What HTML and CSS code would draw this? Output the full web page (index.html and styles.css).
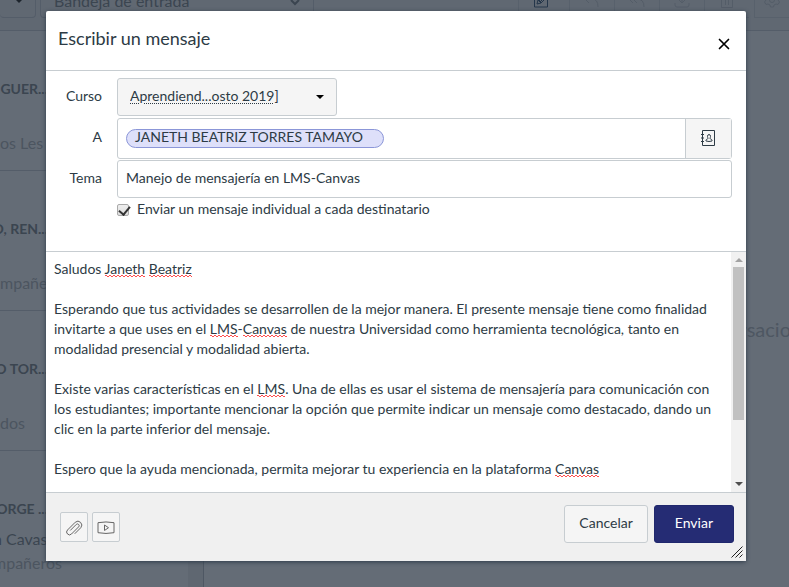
FILE: index.html
```html
<!DOCTYPE html>
<html lang="es">
<head>
<meta charset="utf-8">
<meta name="viewport" content="width=device-width, initial-scale=1">
<title>Escribir un mensaje</title>
<link rel="stylesheet" href="styles.css">
</head>
<body>
<div class="inbox" inert>
  <header class="toolbar">
    <div class="filter filter-course"><span class="caret-small"></span></div>
    <div class="filter filter-box">Bandeja de entrada
      <svg width="10" height="8" viewBox="0 0 10 8"><path d="M1 0l4 4 4-4" fill="none" stroke="currentColor" stroke-width="2"/></svg>
    </div>
    <div class="tools">
      <div class="tool tool-active"><svg width="16" height="16" viewBox="0 0 16 16" fill="none" stroke="currentColor"><path d="M6 2.500H1.500v12.500h13V7M4 12l1-4 7-7 3 3-7 7zM5 8l3 3M6 9l6-6M7 10l6-6"/></svg></div>
      <div class="tool tool-first"><svg width="16" height="16" viewBox="0 0 16 16" fill="none" stroke="currentColor"><path d="M5 3L1 7l4 4M1 7h7q6 0 6 8"/></svg></div>
      <div class="tool"><svg width="18" height="16" viewBox="0 0 18 16" fill="none" stroke="currentColor"><path d="M5 3L1 7l4 4M9 3L5 7l4 4M5 7h4q7 0 7 8"/></svg></div>
      <div class="tool"><svg width="16" height="16" viewBox="0 0 16 16" fill="none" stroke="currentColor"><path d="M8 0v11M4 7l4 4 4-4M1 11v2q0 2 2 2h10q2 0 2-2v-2"/></svg></div>
      <div class="tool"><svg width="16" height="16" viewBox="0 0 16 16" fill="none" stroke="currentColor"><path d="M2.500 2v13.500h11V2M6.500 4v9M9.500 4v9M1 2h14"/></svg></div>
      <div class="tool tool-gear"><svg width="16" height="16" viewBox="0 0 16 16" fill="none" stroke="currentColor"><circle cx="8" cy="8" r="2.500"/><path d="M6.500 1h3l.5 2 2 1 2-.5 1.500 2.500-1.500 2 1.500 2-1.500 2.500-2-.5-2 1-.5 2h-3L6 13l-2-1-2 .5L.5 10 2 8 .5 6 2 3.500l2 .5 2-1z"/></svg></div>
    </div>
  </header>
  <div class="panes">
    <ul class="threads">
      <li><b>GUER...</b><span class="subject"></span><span class="snippet">os Les</span></li>
      <li><b>O, REN...</b><span class="subject"></span><span class="snippet">mpañeros</span></li>
      <li><b>O TOR...</b><span class="subject"></span><span class="snippet">dos</span></li>
      <li class="compact"><b>ORGE ...</b><span class="subject">n Cavas</span><span class="snippet">mpañeros</span></li>
    </ul>
    <div class="track"></div>
    <div class="empty"><p>No hay conversaciones</p></div>
  </div>
</div>

<form class="dialog" role="dialog" aria-labelledby="dialog-title">
  <header class="dialog-head">
    <h1 id="dialog-title">Escribir un mensaje</h1>
    <button class="close" type="button" aria-label="Cerrar"><svg width="12" height="12" viewBox="0 0 12 12"><path d="M1.500 1.500l9 9m0-9l-9 9" stroke="#000" stroke-width="1.700" stroke-linecap="round"/></svg></button>
  </header>

  <div class="fields">
    <label for="course">Curso</label>
    <div class="course-wrap">
      <select id="course" class="course"><option>Aprendiend...osto 2019]</option></select>
      <span class="caret"></span>
    </div>

    <label for="to">A</label>
    <div class="recipients">
      <div class="tokens">
        <span class="token">JANETH BEATRIZ TORRES TAMAYO</span>
        <input id="to" class="to-input" type="text">
      </div>
      <button class="address-book" type="button" aria-label="Libreta de direcciones"><svg width="16" height="16" viewBox="0 0 16 16" fill="none" stroke="#2d3b45"><path d="M2.500.5h12v15h-12zM1 4.500h3M1 8h3M1 11.500h3"/><path d="M7.500 6.500a1.500 2 0 0 1 3 0c0 1-.5 1.300-.5 2 0 .5 1.700.5 2 1.700v.8q-3 1-6 0v-.8c.3-1.200 2-1.200 2-1.700 0-.7-.5-1-.5-2z"/></svg></button>
    </div>

    <label for="subject">Tema</label>
    <input id="subject" class="subject-input" type="text" value="Manejo de mensajería en LMS-Canvas">

    <div class="individual">
      <input id="bulk" type="checkbox" checked>
      <label for="bulk">Enviar un mensaje individual a cada destinatario</label>
    </div>
  </div>

  <div class="editor">
    <div class="message" role="textbox" aria-multiline="true" aria-label="Mensaje" contenteditable="true" spellcheck="false"><p>Saludos <u>Janeth</u> <u>Beatriz</u></p><p>Esperando que tus actividades se desarrollen de la mejor manera. El presente mensaje tiene como finalidad invitarte a que uses en el <u>LMS</u>-<u>Canvas</u> de nuestra Universidad como herramienta tecnológica, tanto en modalidad presencial y modalidad abierta.</p><p>Existe varias características en el <u>LMS</u>. Una de ellas es usar el sistema de mensajería para comunicación con los estudiantes; importante mencionar la opción que permite indicar un mensaje como destacado, dando un clic en la parte inferior del mensaje.</p><p>Espero que la ayuda mencionada, permita mejorar tu experiencia en la plataforma <u>Canvas</u></p></div>
    <div class="scrollbar" aria-hidden="true">
      <span class="arrow arrow-up"></span>
      <span class="thumb"></span>
      <span class="arrow arrow-down"></span>
    </div>
  </div>

  <footer class="dialog-foot">
    <div class="attach">
      <button type="button" aria-label="Adjuntar archivo"><svg width="18" height="18" viewBox="0 0 18 18" fill="none" stroke="#666" stroke-linecap="round"><path d="M10 15.500l5.800-5.800a3.900 3.900 0 0 0-5.500-5.500L2.500 12a2.800 2.800 0 0 0 4 4l7.200-7.200a1.700 1.700 0 0 0-2.400-2.400L5.500 12.200"/></svg></button>
      <button type="button" aria-label="Grabar multimedia"><svg width="18" height="18" viewBox="0 0 18 18" fill="none" stroke="#666"><path d="M1 4.700q8-1.500 16 0v10q-8 1.500-16 0z"/><path d="M7.500 7l4 2.700-4 2.800z"/></svg></button>
    </div>
    <div class="actions">
      <button class="btn" type="button">Cancelar</button>
      <button class="btn btn-primary" type="submit">Enviar</button>
    </div>
    <svg class="grip" width="12" height="12" viewBox="0 0 12 12" stroke="#222" aria-hidden="true"><path d="M.5 11.500l11-11M4.500 11.500l7-7M8.500 11.500l3-3"/></svg>
  </footer>
</form>
</body>
</html>
```

FILE: styles.css
```css
* {
  box-sizing: border-box;
}

body {
  margin: 0;
  height: 100vh;
  overflow: hidden;
  padding: 11px 43px 0 46px;
  background: #646c76;
  color: #2d3b45;
  font: 14px/20px Lato, "Liberation Sans", sans-serif;
}

h1, p, ul {
  margin: 0;
  padding: 0;
}

button, input, select {
  font: inherit;
  color: inherit;
}

/* Dimmed inbox behind the dialog */
.inbox {
  position: absolute;
  inset: 0;
  display: flex;
  flex-direction: column;
  overflow: hidden;
  color: #3b4550;
}

.toolbar {
  flex: none;
  display: flex;
  gap: 4px;
  height: 31px;
  padding-bottom: 12px;
  border-bottom: 1px solid #545d69;
  background: #606872;
}

.filter {
  border: 1px solid #545d69;
  border-top: 0;
  border-radius: 0 0 4px 4px;
}

.filter-course {
  width: 36px;
  border-left: 0;
}

.caret-small {
  display: block;
  width: 6px;
  margin-left: 16px;
  border: 3px solid transparent;
  border-top-color: #1d242c;
  border-bottom: 0;
}

.filter-box {
  display: flex;
  justify-content: space-between;
  width: 274px;
  padding: 0 13px;
  font-size: 16px;
  line-height: 2px;
}

.tools {
  display: flex;
  margin-left: auto;
}

.tool {
  width: 45px;
  height: 18px;
  border: 1px solid #58616c;
  border-width: 0 0 1px 1px;
  color: #545d68;
}

.tool svg {
  display: block;
  margin: -8px auto 0;
}

.tool-active {
  color: #24364a;
}

.tool-first {
  margin-left: 6px;
}

.tool-gear {
  margin-left: 5px;
  width: 35px;
}

.panes {
  flex: 1;
  display: flex;
  min-height: 0;
}

.threads {
  flex: none;
  width: 188px;
  list-style: none;
}

.threads li {
  display: flex;
  flex-direction: column;
  height: 140px;
  padding-top: 48px;
  border-bottom: 1px solid #545d69;
}

.threads b {
  display: flex;
  justify-content: flex-end;
  width: 48px;
  white-space: nowrap;
}

.subject {
  height: 24px;
  padding-top: 10px;
  font-size: 16px;
}

.snippet {
  padding-top: 10px;
  font-size: 16px;
  color: #4c5560;
}

.compact .subject,
.compact .snippet {
  text-indent: -7px;
}

.track {
  flex: none;
  width: 16px;
  border-right: 1px solid #4e5763;
  background: #5f6771;
}

.empty {
  flex: 1;
  display: flex;
  align-items: center;
  min-width: 0;
  padding: 40px 0 0 416px;
  font-size: 20px;
  white-space: nowrap;
  color: #4e5762;
}

/* Dialog */
.dialog {
  position: relative;
  border-radius: 2px;
  background: #fff;
  box-shadow: 0 1px 4px #2d3a49;
}

.dialog-head {
  display: flex;
  justify-content: space-between;
  height: 60px;
  padding: 15px 12px 0;
  border-bottom: 1px solid #c7cdd1;
}

h1 {
  font-size: 18px;
  line-height: 24px;
  font-weight: 400;
}

.close {
  display: flex;
  align-items: center;
  justify-content: center;
  width: 20px;
  height: 20px;
  margin-top: 8px;
  padding: 0;
  border: 0;
  background: none;
}

.fields {
  display: grid;
  grid-template-columns: 56px 1fr;
  gap: 1px 15px;
  align-items: center;
  padding: 7px 14px 32px 0;
}

.fields > label {
  padding-bottom: 3px;
  text-align: right;
}

.course-wrap {
  position: relative;
  width: 220px;
  margin-bottom: 1px;
}

.course {
  appearance: none;
  display: block;
  width: 100%;
  height: 38px;
  padding: 0 12px 2px;
  border: 1px solid #c7cdd1;
  border-radius: 3px;
  background: #f5f5f5;
  text-decoration: underline dotted 1px;
  text-underline-offset: 2px;
}

.caret {
  position: absolute;
  right: 13px;
  top: 17px;
  border: 4px solid transparent;
  border-top-color: #000;
  border-bottom: 0;
}

.recipients {
  display: flex;
  height: 41px;
  border: 1px solid #c7cdd1;
  border-radius: 3px;
}

.tokens {
  flex: 1;
  display: flex;
  align-items: center;
  padding: 0 8px;
}

.token {
  height: 19px;
  padding: 0 20px 0 8px;
  border: 1px solid #8b96d8;
  border-radius: 10px;
  background: #dee0fa;
  line-height: 14px;
}

.to-input {
  flex: 1;
  min-width: 0;
  border: 0;
  outline: 0;
}

.address-book {
  display: flex;
  align-items: center;
  justify-content: center;
  width: 46px;
  padding: 0 1px 1px 0;
  border: 0;
  border-left: 1px solid #c7cdd1;
  background: #f5f5f5;
}

.subject-input {
  width: 100%;
  height: 38px;
  padding: 0 8px 3px;
  border: 1px solid #c7cdd1;
  border-radius: 3px;
}

.individual {
  grid-column: 2;
  display: flex;
  align-items: center;
  gap: 8px;
}

.individual input {
  appearance: none;
  width: 12px;
  height: 12px;
  margin: 2px 0 0;
  border: 1px solid #aaa;
  border-radius: 2px;
  background: linear-gradient(#eee, #ddd);
}

.individual input:checked::before {
  content: "";
  display: block;
  width: 5px;
  height: 9px;
  margin: -1px 0 0 3px;
  border: solid #333;
  border-width: 0 2px 2px 0;
  transform: rotate(40deg);
}

.editor {
  display: flex;
  height: 242px;
  border: 1px solid #c7cdd1;
  border-width: 1px 0;
}

.message {
  flex: 1;
  min-width: 0;
  overflow: hidden;
  padding: 7px 16px 0 8px;
  outline: 0;
}

.message p + p {
  margin-top: 20px;
}

/* Fine zigzag under misspelled words */
.message u {
  text-decoration: none;
  background:
    linear-gradient(90deg, #ff4d4d 50%, transparent 50%) 0 calc(100% - 1px) / 4px 1px repeat-x,
    linear-gradient(90deg, transparent 50%, #ff4d4d 50%) 0 100% / 4px 1px repeat-x;
}

.scrollbar {
  display: flex;
  flex-direction: column;
  align-items: center;
  width: 15px;
  background: #f1f1f1;
}

.arrow {
  border: 4px solid transparent;
}

.arrow-up {
  margin: 6px 0 5px;
  border-top: 0;
  border-bottom-color: #a3a3a3;
}

.arrow-down {
  margin: auto 0 6px;
  border-bottom: 0;
  border-top-color: #505050;
}

.thumb {
  width: 11px;
  height: 153px;
  background: #c1c1c1;
}

.dialog-foot {
  position: relative;
  display: flex;
  justify-content: space-between;
  padding: 12px 12px 18px 14px;
  background: #f0f0f0;
}

.attach {
  display: flex;
  gap: 4px;
  padding-top: 7px;
}

.attach button {
  display: flex;
  align-items: center;
  justify-content: center;
  width: 28px;
  height: 30px;
  padding: 0;
  border: 1px solid #c7cdd1;
  border-radius: 2px;
  background: #f5f5f5;
}

.actions {
  display: flex;
  gap: 6px;
}

.btn {
  height: 38px;
  padding: 0 14px 2px;
  border: 1px solid #c7cdd1;
  border-radius: 3px;
  background: #f5f5f5;
}

.btn-primary {
  padding: 0 20px 2px;
  border-color: #20286d;
  background: #252c74;
  color: #fff;
}

.grip {
  position: absolute;
  right: 3px;
  bottom: 3px;
}
```
